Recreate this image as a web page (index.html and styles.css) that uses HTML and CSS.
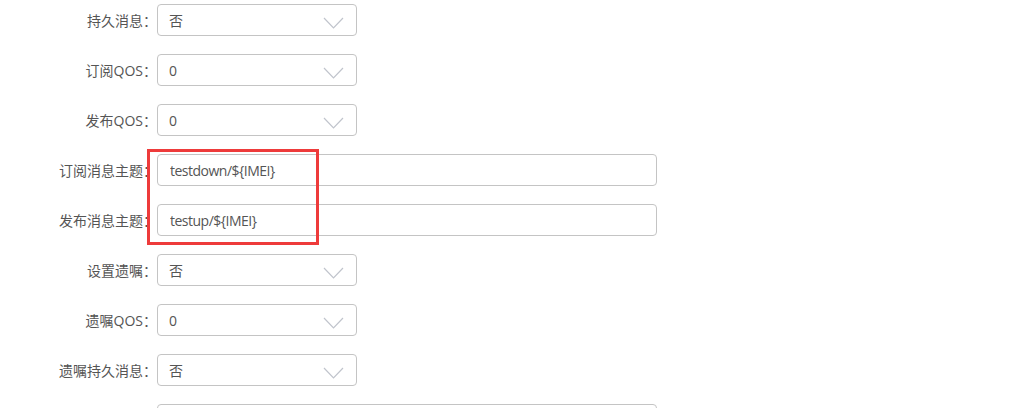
FILE: index.html
```html
<!DOCTYPE html>
<html lang="zh-CN">
<head>
    <meta charset="UTF-8">
    <title>MQTT 设置</title>
    <link rel="stylesheet" href="styles.css">
</head>
<body>
    <div class="form">
        <div class="form-item">
            <label class="form-label">持久消息：</label>
            <div class="select"><span>否</span><svg class="arrow" width="21" height="12" viewBox="0 0 21 12"><polyline points="1,1 10.5,11 20,1"/></svg></div>
        </div>
        <div class="form-item">
            <label class="form-label">订阅QOS：</label>
            <div class="select"><span>0</span><svg class="arrow" width="21" height="12" viewBox="0 0 21 12"><polyline points="1,1 10.5,11 20,1"/></svg></div>
        </div>
        <div class="form-item">
            <label class="form-label">发布QOS：</label>
            <div class="select"><span>0</span><svg class="arrow" width="21" height="12" viewBox="0 0 21 12"><polyline points="1,1 10.5,11 20,1"/></svg></div>
        </div>
        <div class="form-item">
            <label class="form-label">订阅消息主题：</label>
            <input class="input" type="text" value="testdown/${IMEI}">
        </div>
        <div class="form-item">
            <label class="form-label">发布消息主题：</label>
            <input class="input" type="text" value="testup/${IMEI}">
        </div>
        <div class="form-item">
            <label class="form-label">设置遗嘱：</label>
            <div class="select"><span>否</span><svg class="arrow" width="21" height="12" viewBox="0 0 21 12"><polyline points="1,1 10.5,11 20,1"/></svg></div>
        </div>
        <div class="form-item">
            <label class="form-label">遗嘱QOS：</label>
            <div class="select"><span>0</span><svg class="arrow" width="21" height="12" viewBox="0 0 21 12"><polyline points="1,1 10.5,11 20,1"/></svg></div>
        </div>
        <div class="form-item">
            <label class="form-label">遗嘱持久消息：</label>
            <div class="select"><span>否</span><svg class="arrow" width="21" height="12" viewBox="0 0 21 12"><polyline points="1,1 10.5,11 20,1"/></svg></div>
        </div>
        <div class="form-item">
            <label class="form-label"></label>
            <input class="input" type="text" value="">
        </div>

        <!-- highlight round the two topic fields -->
        <div class="highlight"></div>
    </div>
</body>
</html>
```

FILE: styles.css
```css
body {
    margin: 0;
    background-color: #fff;
    font-family: "Open Sans", "Noto Sans CJK SC", sans-serif;
    font-size: 14px;
    color: #606266;
    overflow: hidden;
}

.form {
    position: relative;
    padding-top: 4px;
}

.form-item {
    display: flex;
    align-items: center;
    height: 32px;
    margin-bottom: 18px;
}

.form-label {
    width: 157px;
    flex-shrink: 0;
    text-align: right;
    color: #555;
}

.select {
    box-sizing: border-box;
    width: 200px;
    height: 32px;
    border: 1px solid #c4c4c4;
    border-radius: 4px;
    display: flex;
    align-items: center;
    justify-content: space-between;
    padding: 0 12px 0 11px;
    color: #555;
}

.arrow {
    margin-top: 5px;
}

.arrow polyline {
    fill: none;
    stroke: #c0c4cc;
    stroke-width: 1.2;
}

.input {
    box-sizing: border-box;
    width: 500px;
    height: 32px;
    border: 1px solid #c4c4c4;
    border-radius: 4px;
    padding: 0 12px;
    font-family: "Open Sans", "Noto Sans CJK SC", sans-serif;
    font-size: 14px;
    letter-spacing: -0.5px;
    color: #555;
    outline: none;
}

.highlight {
    position: absolute;
    left: 147px;
    top: 149px;
    width: 166px;
    height: 90px;
    border: 3px solid #ee3b3b;
}
```
